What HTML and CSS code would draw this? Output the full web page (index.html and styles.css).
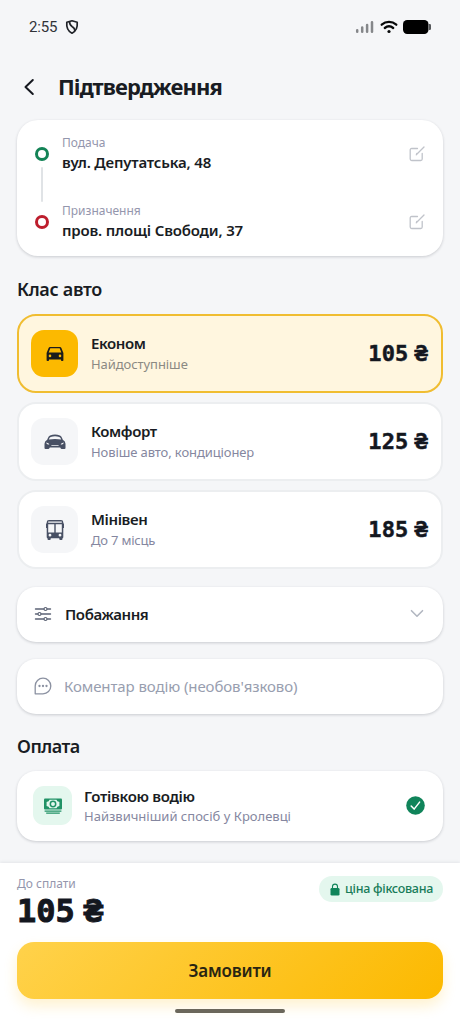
FILE: index.html
```html
<!DOCTYPE html>
<html lang="uk">
<head>
<meta charset="utf-8">
<meta name="viewport" content="width=device-width, initial-scale=1">
<title>Підтвердження</title>
<link rel="stylesheet" href="styles.css">
</head>
<body>
<div class="screen">
  <div class="status">
    <span class="clock">2:55</span>
    <svg class="shield" width="14" height="16" viewBox="0 0 14 16" fill="none" stroke="#202328" stroke-width="1.7" stroke-linejoin="round"><path d="M7 1.800 12.200 3.300c.5 5-.9 8.700-5.200 10.900C2.700 12 1.300 8.300 1.800 3.300Z"/><path d="M4.500 2.600c0 3.200.8 4 2.800 5.200 2 1.100 2.700 2.100 2.500 4.200"/></svg>
    <span class="spacer"></span>
    <svg width="19" height="14" viewBox="0 0 19 14" stroke="#85878a" stroke-width="2.500" stroke-linecap="round"><path d="M2.200 10.300v1.500M7.200 7.600v4.200M12.100 5v6.800M17 2.200v9.600"/></svg>
    <svg class="wifi" width="18" height="14" viewBox="0 0 18 14" fill="none" stroke="#08090a" stroke-width="2.300" stroke-linecap="round"><path d="M1.700 4.700c4.300-3.700 10.300-3.700 14.600 0M4.800 8c2.500-2.100 5.900-2.100 8.400 0"/><circle cx="9" cy="11.500" r="1.600" fill="#08090a" stroke="none"/></svg>
    <svg class="battery" width="29" height="14" viewBox="0 0 29 14"><rect width="25.500" height="14" rx="4.200" fill="#000"/><path d="M26 4h.8q1.200 0 1.200 1.200v3.600q0 1.200-1.200 1.200H26z" fill="#55575a"/></svg>
  </div>

  <header class="header">
    <svg width="12" height="18" viewBox="0 0 12 18" fill="none" stroke="#15181f" stroke-width="2" stroke-linecap="round" stroke-linejoin="round"><path d="M9.800 2 2.500 9l7.300 7"/></svg>
    <h1 class="title">Підтвердження</h1>
  </header>

  <main class="content">
    <section class="card route">
      <div class="stop">
        <span class="dot dot-from"></span>
        <div class="text"><span class="label">Подача</span><span class="name addr">вул. Депутатська, 48</span></div>
        <svg width="16" height="16" viewBox="0 0 16 16" fill="none" stroke="#c0c3ca" stroke-width="1.300" stroke-linecap="round" stroke-linejoin="round"><path d="M8.500 2.500H2.700Q1.200 2.500 1.200 4v9q0 1.500 1.500 1.500h9q1.500 0 1.500-1.500V7.500M7.500 8.500 15 1M7.300 8.900l.5-1.400"/></svg>
      </div>
      <span class="line"></span>
      <div class="stop">
        <span class="dot dot-to"></span>
        <div class="text"><span class="label">Призначення</span><span class="name addr">пров. площі Свободи, 37</span></div>
        <svg width="16" height="16" viewBox="0 0 16 16" fill="none" stroke="#c0c3ca" stroke-width="1.300" stroke-linecap="round" stroke-linejoin="round"><path d="M8.500 2.500H2.700Q1.200 2.500 1.200 4v9q0 1.500 1.500 1.500h9q1.500 0 1.500-1.500V7.500M7.500 8.500 15 1M7.300 8.900l.5-1.400"/></svg>
      </div>
    </section>

    <h2 class="section class-title">Клас авто</h2>
    <div class="options">
      <div class="option selected">
        <span class="tile"><svg width="18" height="16" viewBox="0 0 18 16" fill="#1c1c1c"><path fill-rule="evenodd" d="M4.200 1h9.600q1.300 0 1.700 1.200L17.400 7v7.200q0 .8-.8.800h-.8q-.8 0-.8-.8v-.8H3v.8q0 .8-.8.800h-.8q-.8 0-.8-.8V7l1.900-4.800Q2.900 1 4.200 1ZM4.300 2.200 2.700 6.400h12.600l-1.600-4.200ZM4 8.600a1.300 1.300 0 1 0 0 2.600 1.300 1.300 0 0 0 0-2.600Zm10 0a1.300 1.300 0 1 0 0 2.600 1.300 1.300 0 0 0 0-2.600Z"/></svg></span>
        <div class="text"><span class="name n-eco">Економ</span><span class="sub">Найдоступніше</span></div>
        <span class="price">105<i class="gap"></i>₴</span>
      </div>
      <div class="option">
        <span class="tile"><svg width="22" height="16" viewBox="0 0 22 16" fill="#485064"><path fill-rule="evenodd" d="M6 1.400Q11-.4 16 1.400q1.400.6 2.300 3.200l.5 1.200q2.700 1.300 2.700 4v4.300q0 1-1 1h-2.700q-1 0-1.300-1l-.3-.6h-10.400l-.3.6q-.3 1-1.300 1H1.500q-1 0-1-1V9.800q0-2.700 2.700-4l.5-1.200Q4.600 2 6 1.400Zm.7 1.500Q5.500 3.300 4.800 5.600q6.200-1 12.400 0-.7-2.300-1.900-2.700-4.300-1.300-8.600 0ZM2.200 8.500q0 1.900 3.200 2.100Q5 8.800 2.200 8.500Zm17.600 0q-2.800.3-3.200 2.100 3.200-.2 3.200-2.100ZM7 11.200h8l-.8.900H7.800Z"/></svg></span>
        <div class="text"><span class="name n-com">Комфорт</span><span class="sub s-com">Новіше авто, кондиціонер</span></div>
        <span class="price">125<i class="gap"></i>₴</span>
      </div>
      <div class="option">
        <span class="tile"><svg width="20" height="22" viewBox="0 0 20 22" fill="#485064"><path fill-rule="evenodd" d="M4 1h12q2.300 0 2.300 2.300v1.200h.7v4.400h-.7v9.400q0 .7-.8.900v.8q0 1-1 1h-1.200q-1 0-1-1v-.8H5.700v.8q0 1-1 1H3.500q-1 0-1-1v-.8q-.8-.2-.8-.9V8.900H1V4.500h.7V3.300Q1.700 1 4 1Zm-.8 1.600v1.200h13.600V2.600Zm0 2.600v8.300h6.100V5.200Zm7.500 0v8.300h6.100V5.200ZM5 14.800a1.400 1.400 0 1 0 0 2.800 1.400 1.400 0 0 0 0-2.800Zm10 0a1.400 1.400 0 1 0 0 2.800 1.400 1.400 0 0 0 0-2.800Z"/></svg></span>
        <div class="text"><span class="name n-min">Мінівен</span><span class="sub s-min">До 7 місць</span></div>
        <span class="price">185<i class="gap"></i>₴</span>
      </div>
    </div>

    <div class="card field wishes">
      <svg width="18" height="16" viewBox="0 0 18 16" fill="none" stroke="#5c6375" stroke-width="1.400" stroke-linecap="round"><path d="M1.500 3h8.200M13.300 3h3.200M1.500 8h2.200M7.300 8h9.200M1.500 13h8.200M13.300 13h3.200"/><g stroke-width="1.200"><circle cx="11.500" cy="3" r="1.500"/><circle cx="5.500" cy="8" r="1.500"/><circle cx="11.500" cy="13" r="1.500"/></g></svg>
      <span class="name n-wish">Побажання</span>
      <svg class="chevron" width="14" height="9" viewBox="0 0 14 9" fill="none" stroke="#b2b7c1" stroke-width="1.600" stroke-linecap="round" stroke-linejoin="round"><path d="m1.500 1.700 5.500 5.500 5.500-5.500"/></svg>
    </div>

    <div class="card field comment">
      <svg width="18" height="18" viewBox="0 0 18 18" fill="none" stroke="#8b91a1" stroke-width="1.300" stroke-linejoin="round"><path d="M1.200 16.800V9A7.800 7.800 0 1 1 9 16.800Z"/><g fill="#8b91a1" stroke="none"><circle cx="5.500" cy="9" r="1.150"/><circle cx="9" cy="9" r="1.150"/><circle cx="12.500" cy="9" r="1.150"/></g></svg>
      <span class="placeholder">Коментар водію (необов'язково)</span>
    </div>

    <h2 class="section pay-title">Оплата</h2>
    <div class="card pay">
      <span class="cash"><svg width="20" height="18" viewBox="0 0 20 18" fill="none" stroke="#219266"><rect x="1" y="1.500" width="18" height="11" rx="1" fill="#219266" stroke="none"/><path d="M6.500 2.800h7q.3 1.800 2.900 2.200v4q-2.600.4-2.900 2.200h-7Q6.200 9.400 3.600 9V5q2.600-.4 2.900-2.200Z" fill="#e4f7ee" stroke="none"/><circle cx="10" cy="7" r="2.700" stroke-width="1.500"/><path d="M1.600 14.100h16.800M3.200 16.100h13.600" stroke-width="1.200"/></svg></span>
      <div class="text"><span class="name n-pay">Готівкою водію</span><span class="sub s-pay">Найзвичніший спосіб у Кролевці</span></div>
      <svg class="check" width="19" height="19" viewBox="0 0 19 19"><circle cx="9.500" cy="9.500" r="9.300" fill="#10845a"/><path d="m5.200 10 2.900 3.100 5.500-7" fill="none" stroke="#fff" stroke-width="1.500" stroke-linecap="round" stroke-linejoin="round"/></svg>
    </div>
  </main>

  <footer class="checkout">
    <div class="summary">
      <div class="total"><span class="label l-total">До сплати</span><span class="amount">105<i class="gap-lg"></i>₴</span></div>
      <span class="badge"><svg width="10" height="13" viewBox="0 0 10 13"><rect x=".5" y="5" width="9" height="7.500" rx="1.300" fill="#10845a"/><path d="M2.500 5.500V3.600a2.500 2.500 0 0 1 5 0v1.900" fill="none" stroke="#10845a" stroke-width="1.100"/></svg><span class="badge-text">ціна фіксована</span></span>
    </div>
    <button class="order">Замовити</button>
    <span class="home"></span>
  </footer>
</div>
</body>
</html>
```
FILE: styles.css
```css
* { box-sizing: border-box; }
body { margin: 0; background: #f5f6f8; font-family: "Noto Sans", "Open Sans", sans-serif; color: #191c23; }
.screen { width: 460px; height: 1024px; display: flex; flex-direction: column; overflow: hidden; white-space: nowrap; }

.status { height: 54px; flex: none; display: flex; align-items: center; padding: 0 28px 0 29px; }
.clock { font: 15px/20px Roboto, sans-serif; letter-spacing: -.2px; color: #303338; }
.shield { margin-left: 8px; }
.spacer { flex: 1; }
.wifi { margin-left: 6px; }
.battery { margin-left: 5px; }

.header { height: 66px; flex: none; display: flex; align-items: center; gap: 23px; padding: 0 0 0 23px; }
.title { margin: 0 0 2px; font-size: 22px; line-height: 30px; font-weight: 700; letter-spacing: -.9px; }

.content { flex: none; height: 743px; padding: 0 17px; }
.card { background: #fff; border-radius: 19px; box-shadow: 0 1px 3px rgba(30, 36, 48, .2); }
.text { flex: 1; display: flex; flex-direction: column; }
.label { font-size: 12px; line-height: 16px; color: #9496ad; }
.name { font-size: 15px; line-height: 20px; font-weight: 600; }
.sub { font-size: 13px; line-height: 18px; color: #8587a0; letter-spacing: -.07px; }

.route { height: 136px; border-radius: 21px; padding: 15px 18px; display: flex; flex-direction: column; }
.stop { height: 38px; display: flex; align-items: center; gap: 13px; }
.addr { line-height: 22px; letter-spacing: -.18px; }
.dot { width: 14px; height: 14px; border-radius: 50%; border: 3px solid #138356; }
.dot-to { border-color: #bd1e2d; }
.line { width: 2px; height: 35px; margin: -6px 0 1px 6px; background: #e0e3e6; border-radius: 1px; }

.section { margin: 0; height: 58px; padding-top: 20px; font-size: 18px; line-height: 26px; font-weight: 600; }
.class-title { letter-spacing: -.3px; }
.options { display: flex; flex-direction: column; gap: 9px; }
.option { height: 79px; display: flex; align-items: center; gap: 13px; padding: 0 13px 0 12px; background: #fff; border: 2px solid #eceef0; border-radius: 19px; }
.selected { background: #fff6df; border-color: #f0bd31; }
.tile { width: 47px; height: 47px; border-radius: 13px; background: #f5f6f8; display: flex; align-items: center; justify-content: center; }
.selected .tile { background: #fcb900; }
.selected .sub { color: #8b8983; }
.option .text { gap: 2px; margin-top: -1px; }
.n-eco, .n-min { letter-spacing: -.4px; }
.n-com { letter-spacing: -.4px; }
.s-com { letter-spacing: -.1px; }
.s-min { letter-spacing: -.2px; }
.price { display: flex; font: 700 22px/28px "DejaVu Sans Mono", monospace; letter-spacing: .2px; -webkit-text-stroke: .5px #14171f; color: #14171f; }
.gap { width: 6px; }

.field { height: 55px; margin-top: 17px; padding: 0 19px 2px 17px; display: flex; align-items: center; gap: 13px; }
.wishes { margin-top: 18px; }
.n-wish { letter-spacing: -.4px; }
.chevron { margin-left: auto; }
.comment { gap: 12px; }
.placeholder { font-size: 15px; line-height: 20px; letter-spacing: -.1px; color: #989eaf; }
.pay-title { height: 57px; padding-top: 19px; letter-spacing: -.5px; }
.pay { height: 70px; padding: 0 18px 1px 16px; display: flex; align-items: center; gap: 12px; }
.cash { width: 39px; height: 39px; border-radius: 11px; background: #e4f7ee; display: flex; align-items: center; justify-content: center; }
.pay .text { gap: 1px; }
.n-pay { letter-spacing: -.3px; }
.s-pay { letter-spacing: 0; }

.checkout { flex: 1; background: #fff; box-shadow: 0 -1px 3px rgba(30, 36, 48, .08); padding: 13px 17px 0; display: flex; flex-direction: column; }
.summary { height: 66px; display: flex; justify-content: space-between; align-items: flex-start; }
.total { display: flex; flex-direction: column; }
.amount { display: flex; padding-top: 1px; font: 700 32px/36px "DejaVu Sans Mono", monospace; letter-spacing: 0; -webkit-text-stroke: 1px #14171f; color: #14171f; }
.gap-lg { width: 9px; }
.badge { height: 26px; padding: 0 10px 0 11px; border-radius: 13px; background: #e4f7ee; color: #187c59; display: flex; align-items: center; gap: 5px; }
.badge-text { font-size: 12.5px; line-height: 18px; font-weight: 500; letter-spacing: -.28px; }
.order { height: 57px; flex: none; border: 0; border-radius: 17px; background: linear-gradient(135deg, #ffd24b, #fcb900); box-shadow: 0 7px 14px rgba(255, 190, 20, .2); font: 600 17px/24px "Noto Sans", sans-serif; letter-spacing: -.2px; color: #292512; }
.home { width: 110px; height: 4px; margin: 10px auto 0; border-radius: 2px; background: #6b675b; position: relative; }
```
